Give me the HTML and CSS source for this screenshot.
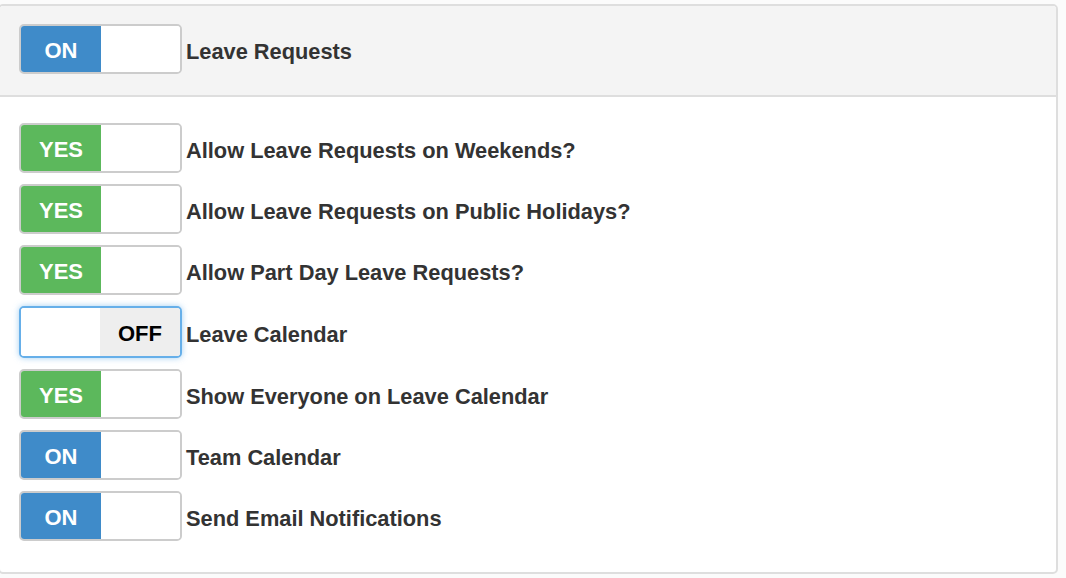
FILE: index.html
```html
<!DOCTYPE html>
<html>
<head>
<meta charset="utf-8">
<link rel="stylesheet" href="styles.css">
</head>
<body>
<div class="panel">
  <div class="panel-head">
    <div class="row">
      <div class="switch"><span class="handle on">ON</span><span class="blank"></span></div>
      <span class="label">Leave Requests</span>
    </div>
  </div>
  <div class="panel-body">
    <div class="row">
      <div class="switch"><span class="handle yes">YES</span><span class="blank"></span></div>
      <span class="label">Allow Leave Requests on Weekends?</span>
    </div>
    <div class="row">
      <div class="switch"><span class="handle yes">YES</span><span class="blank"></span></div>
      <span class="label">Allow Leave Requests on Public Holidays?</span>
    </div>
    <div class="row">
      <div class="switch"><span class="handle yes">YES</span><span class="blank"></span></div>
      <span class="label">Allow Part Day Leave Requests?</span>
    </div>
    <div class="row">
      <div class="switch focused"><span class="blank"></span><span class="handle off">OFF</span></div>
      <span class="label">Leave Calendar</span>
    </div>
    <div class="row">
      <div class="switch"><span class="handle yes">YES</span><span class="blank"></span></div>
      <span class="label">Show Everyone on Leave Calendar</span>
    </div>
    <div class="row">
      <div class="switch"><span class="handle on">ON</span><span class="blank"></span></div>
      <span class="label">Team Calendar</span>
    </div>
    <div class="row">
      <div class="switch"><span class="handle on">ON</span><span class="blank"></span></div>
      <span class="label">Send Email Notifications</span>
    </div>
  </div>
</div>
</body>
</html>
```

FILE: styles.css
```css
html, body {
  margin: 0;
  padding: 0;
  background: #fbfbfb;
  font-family: "Liberation Sans", Arial, Helvetica, sans-serif;
}
body {
  padding: 4px 6px 0 0;
}
.panel {
  margin-left: -2px;
  width: 1060px;
  height: 570px;
  box-sizing: border-box;
  border: 2px solid #dedede;
  border-radius: 5px;
  background: #fff;
  display: flex;
  flex-direction: column;
  overflow: hidden;
}
.panel-head {
  background: #f4f4f4;
  border-bottom: 2px solid #dedede;
  padding: 18px 0 21px 19px;
}
.panel-body {
  padding: 26px 0 0 19px;
  display: flex;
  flex-direction: column;
  gap: 11px;
}
.row {
  display: flex;
  align-items: center;
  gap: 4px;
}
.switch {
  display: flex;
  width: 163px;
  height: 50px;
  box-sizing: border-box;
  border: 2px solid #cccccc;
  border-radius: 5px;
  overflow: hidden;
  background: #fff;
}
.switch.focused {
  height: 52px;
  border-color: #66afe9;
  box-shadow: 0 0 6px rgba(102, 175, 233, 0.6);
}
.handle, .blank {
  width: 80px;
  flex: none;
  display: flex;
  align-items: center;
  justify-content: center;
  font-weight: bold;
  font-size: 22px;
  padding-top: 4px;
}
.blank {
  flex: 1;
  background: #fff;
}
.handle.on {
  background: #3f8bc9;
  color: #fff;
}
.handle.yes {
  background: #5cb85c;
  color: #fff;
}
.handle.off {
  background: #eeeeee;
  color: #000;
}
.label {
  font-weight: bold;
  font-size: 21.8px;
  color: #333;
  padding-top: 5px;
}
```
